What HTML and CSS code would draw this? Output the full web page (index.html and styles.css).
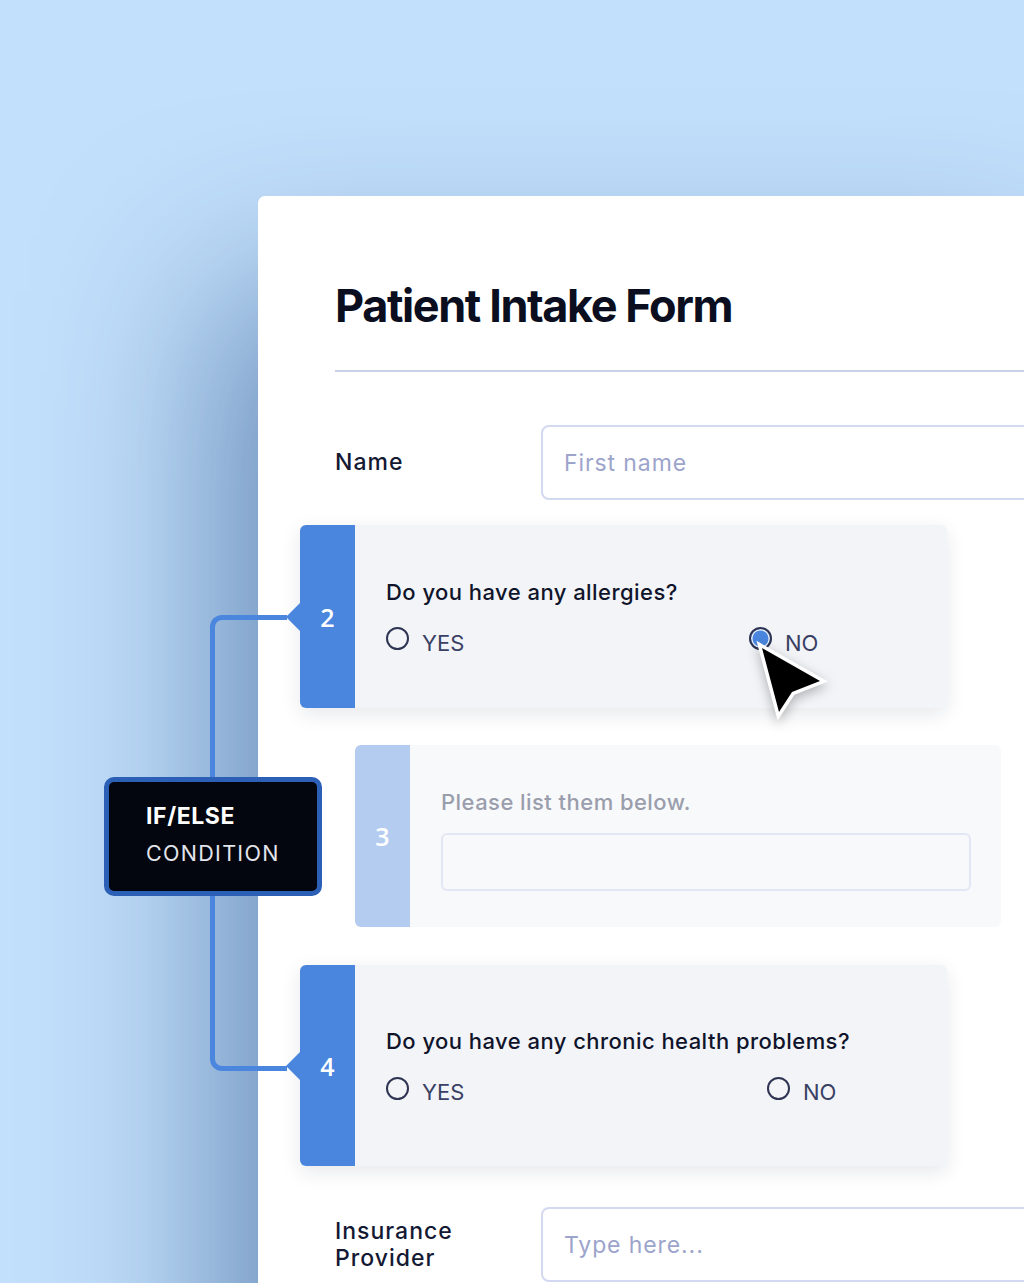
FILE: index.html
```html
<!DOCTYPE html>
<html lang="en">
<head>
<meta charset="utf-8">
<title>Patient Intake Form</title>
<link rel="stylesheet" href="styles.css">
</head>
<body>
<div class="scene">
  <section class="form-card">
    <h1 class="title">Patient Intake Form</h1>
    <div class="divider"></div>

    <div class="field-row">
      <div class="field-label">Name</div>
      <div class="text-input"><span class="placeholder">First name</span></div>
    </div>

    <div class="question q-two">
      <div class="q-strip"><span class="q-num">2</span></div>
      <div class="q-body">
        <p class="q-text">Do you have any allergies?</p>
        <div class="options options-two">
          <div class="option"><span class="radio"></span><span class="opt-label">YES</span></div>
          <div class="option"><span class="radio radio-checked"></span><span class="opt-label">NO</span></div>
        </div>
      </div>
    </div>

    <div class="question q-three">
      <div class="q-strip"><span class="q-num">3</span></div>
      <div class="q-body">
        <p class="q-text">Please list them below.</p>
        <div class="list-input"></div>
      </div>
    </div>

    <div class="question q-four">
      <div class="q-strip"><span class="q-num">4</span></div>
      <div class="q-body">
        <p class="q-text">Do you have any chronic health problems?</p>
        <div class="options options-four">
          <div class="option"><span class="radio"></span><span class="opt-label">YES</span></div>
          <div class="option"><span class="radio"></span><span class="opt-label">NO</span></div>
        </div>
      </div>
    </div>

    <div class="field-row field-row-ins">
      <div class="field-label">Insurance<br>Provider</div>
      <div class="text-input"><span class="placeholder">Type here...</span></div>
    </div>
  </section>

  <div class="connector"></div>
  <div class="condition">
    <div class="cond-title">IF/ELSE</div>
    <div class="cond-sub">CONDITION</div>
  </div>

  <svg class="cursor" width="100" height="100" viewBox="0 0 100 100" aria-hidden="true">
    <polygon points="12,12 70,45 42,56 29,76" fill="#000" stroke="#fff" stroke-width="7" stroke-linejoin="miter" paint-order="stroke"/>
  </svg>
</div>
</body>
</html>
```

FILE: styles.css
```css
html, body {
  margin: 0;
  padding: 0;
  overflow: hidden;
}

body {
  font-family: "Inter", "Noto Sans", "DejaVu Sans", sans-serif;
  color: #11152c;
}

.scene {
  position: relative;
  width: 1024px;
  height: 1283px;
  overflow: hidden;
  box-sizing: border-box;
  padding: 196px 0 0 258px;
  background: #c2dffb;
}

.form-card {
  width: 820px;
  min-height: 1200px;
  box-sizing: border-box;
  padding: 83px 0 0 77px;
  background: #ffffff;
  border-radius: 7px 0 0 0;
  box-shadow: -40px 95px 170px 0 rgba(25, 65, 125, 0.52);
}

.title {
  margin: 0;
  font-size: 45px;
  line-height: 53px;
  font-weight: 700;
  letter-spacing: -1.4px;
  color: #0a0e1e;
}

.divider {
  margin-top: 38px;
  height: 2px;
  background: #c7d2e8;
}

.field-row {
  display: flex;
  align-items: center;
  margin-top: 53px;
}

.field-label {
  width: 206px;
  flex: none;
  font-size: 23px;
  line-height: 27px;
  font-weight: 500;
  letter-spacing: 1px;
  color: #141933;
}

.text-input {
  flex: 1;
  height: 75px;
  box-sizing: border-box;
  border: 2px solid #d3d9f1;
  border-radius: 8px;
  display: flex;
  align-items: center;
  padding-left: 21px;
}

.placeholder {
  font-size: 23px;
  letter-spacing: 0.9px;
  color: #9ca4cc;
}

.field-row-ins {
  margin-top: 41px;
}

.question {
  position: relative;
  display: flex;
  border-radius: 6px;
  background: #f2f4f8;
  box-shadow: 0 6px 20px rgba(20, 30, 60, 0.10);
}

.q-two {
  margin: 25px 0 0 -35px;
  width: 647px;
  height: 183px;
}

.q-three {
  margin: 37px 0 0 20px;
  width: 646px;
  height: 182px;
  background: #f8f9fb;
  box-shadow: none;
}

.q-four {
  margin: 38px 0 0 -35px;
  width: 647px;
  height: 201px;
}

.q-strip {
  position: relative;
  width: 55px;
  flex: none;
  display: flex;
  align-items: center;
  justify-content: center;
  background: #4a86de;
  border-radius: 6px 0 0 6px;
}

.q-two .q-strip::before,
.q-four .q-strip::before {
  content: "";
  position: absolute;
  left: -14px;
  top: 50%;
  margin-top: -15px;
  border-top: 15px solid transparent;
  border-bottom: 15px solid transparent;
  border-right: 15px solid #4a86de;
}

.q-three .q-strip {
  background: #b5ccf1;
}

.q-num {
  font-family: "Open Sans", "Noto Sans", sans-serif;
  font-size: 25px;
  font-weight: 600;
  color: #ffffff;
}

.q-body {
  flex: 1;
  padding-left: 31px;
  display: flex;
  flex-direction: column;
  justify-content: center;
}

.q-text {
  margin: 0;
  font-size: 22px;
  line-height: 28px;
  font-weight: 450;
  letter-spacing: 0.45px;
  color: #10142b;
}

.q-three .q-body {
  padding-top: 6px;
}

.q-three .q-text {
  color: #9a9eac;
}

.options {
  display: grid;
  margin-top: 21px;
}

.options-two {
  grid-template-columns: 363px auto;
}

.options-four {
  grid-template-columns: 381px auto;
  margin-top: 22px;
}

.option {
  display: flex;
  align-items: center;
  height: 28px;
}

.radio {
  width: 23px;
  height: 23px;
  box-sizing: border-box;
  border: 2px solid #2e3452;
  border-radius: 50%;
  margin-top: -5px;
}

.radio-checked {
  background: #4a86de;
  box-shadow: inset 0 0 0 1.5px #e6edf9;
}

.opt-label {
  margin-left: 13px;
  padding-top: 3px;
  font-size: 22px;
  color: #3a4063;
}

.list-input {
  margin-top: 17px;
  width: 530px;
  height: 58px;
  box-sizing: border-box;
  border: 2px solid #e3e7f5;
  border-radius: 6px;
}

.connector {
  position: absolute;
  left: 210px;
  top: 615px;
  width: 72px;
  height: 446px;
  border: 5px solid #4a86de;
  border-right: none;
  border-radius: 12px 0 0 12px;
}

.condition {
  position: absolute;
  left: 104px;
  top: 777px;
  width: 218px;
  height: 119px;
  box-sizing: border-box;
  padding: 16px 0 0 37px;
  background: #03060f;
  border: 5px solid #2c5fb6;
  border-radius: 10px;
  color: #ffffff;
}

.cond-title {
  font-size: 23px;
  line-height: 37px;
  font-weight: 700;
  letter-spacing: 0.6px;
}

.cond-sub {
  font-size: 21.5px;
  line-height: 37px;
  font-weight: 400;
  letter-spacing: 1.3px;
  color: #e3e5ec;
}

.cursor {
  position: absolute;
  left: 750px;
  top: 636px;
  filter: drop-shadow(0 4px 6px rgba(0, 0, 0, 0.28));
}
```
